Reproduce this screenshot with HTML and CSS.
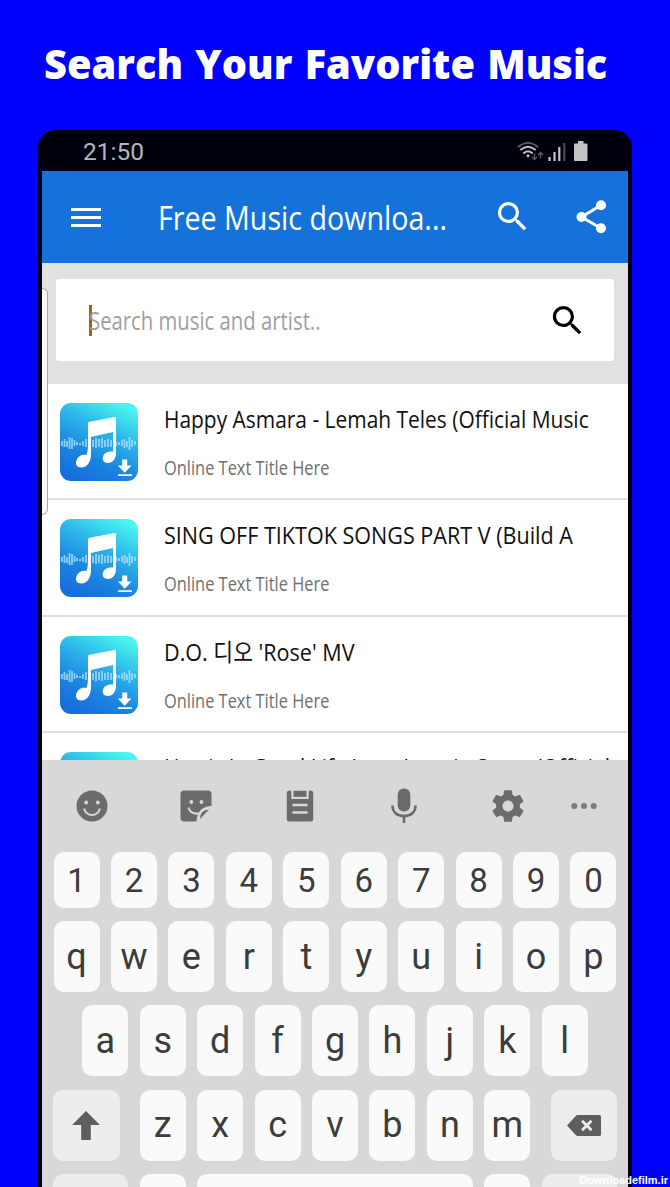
FILE: index.html
```html
<!DOCTYPE html>
<html lang="en">
<head>
    <meta charset="UTF-8">
    <meta name="viewport" content="width=device-width, initial-scale=1.0">
    <title>Search Your Favorite Music</title>
    <link rel="stylesheet" href="styles.css">
</head>
<body>
    <!-- shared shapes -->
    <svg class="defs" width="0" height="0">
        <defs>
            <linearGradient id="cover-bg" x1="0.25" y1="1" x2="0.75" y2="0">
                <stop offset="0" stop-color="#176ddb"/>
                <stop offset="0.3" stop-color="#1b84e0"/>
                <stop offset="0.65" stop-color="#2db6ea"/>
                <stop offset="1" stop-color="#48f5ef"/>
            </linearGradient>
        </defs>
        <symbol id="cover" viewBox="0 0 78 78">
            <rect width="78" height="78" rx="11" fill="url(#cover-bg)"/>
            <path d="M2 38v5M4.500 36v8M7 38v6M9.500 34v12M12 35v11M14.500 37v6M17 39v3M20 40v2M23 38v5M26 36v8M30 36v9M33 37v7M36 35v10M39 36v8M42 35v10M45 37v7M48 36v8M51 37v7M56 38v5M59 39v3M62 37v6M64.500 36v9M67 38v6M69.500 34v13M72 37v7M75 38v4" stroke="#bfeaff" stroke-width="1.800" opacity=".7"/>
            <path d="M28 20.500Q28 19 29.500 18.700L54.500 14Q56 13.800 56 15.200V50C56 56 52.500 60 48 60C43.500 60 42 57 43 53.500C44 50 48 48 53 48.500V29L31 34V51C31 59 27 64.500 21.500 64.500C16.500 64.500 15 61 16.500 57.500C18 53 22 51.300 26.500 52C27.700 49 28 45 28 42Z" fill="#fff"/>
            <path d="M62.200 56.500h5v6h4.300l-6.800 7.300-6.800-7.300h4.300zM58 71.200h14v1.800H58z" fill="#fff"/>
        </symbol>
        <symbol id="search" viewBox="0 0 24 24">
            <path d="M15.500 14h-.79l-.28-.27A6.471 6.471 0 0 0 16 9.500 6.500 6.500 0 1 0 9.500 16c1.610 0 3.090-.59 4.230-1.570l.27.28v.79l5 4.990L20.490 19l-4.990-5zm-6 0C7.010 14 5 11.990 5 9.500S7.010 5 9.500 5 14 7.010 14 9.500 11.990 14 9.500 14z" fill="currentColor"/>
        </symbol>
    </svg>

    <h1 class="headline"><span>Search Your Favorite Music</span></h1>

    <div class="phone">
        <div class="status-bar">
            <div class="clock">21:50</div>
            <svg class="status-icons" width="72" height="24" viewBox="0 0 72 24">
                <g fill="none" stroke="#c4c4ca" stroke-width="1.800">
                    <path d="M.8 7.200Q11 -1.500 21.200 7.200" stroke="#5b5b65"/>
                    <path d="M3.300 10.200Q11 3.300 18.700 10.200M6.300 13.500Q11 9 15.700 13.500"/>
                    <path d="M17.500 13.500v6M15 17l2.500 2.500L20 17M23.500 18.500v-6M21 15l2.500-2.500L26 15" stroke="#5b5b65" stroke-width="1.400"/>
                    <path d="M32.500 17v4M37.500 12v9M42.300 7v14" stroke-width="2.200"/>
                    <path d="M47.300 3v18" stroke="#4b4b55" stroke-width="2.200"/>
                </g>
                <circle cx="11" cy="15.800" r="1.500" fill="#c4c4ca"/>
                <path d="M57 4.500q0-1 1-1h3V1h5.500v2.500h3q1 0 1 1V20q0 1-1 1H58q-1 0-1-1z" fill="#c4c4c6"/>
            </svg>
        </div>

        <div class="app-bar">
            <div class="menu"><i></i><i></i><i></i></div>
            <div class="app-title"><span>Free Music downloa...</span></div>
            <svg class="bar-search" width="39" height="39"><use href="#search"/></svg>
            <svg class="share" width="31" height="34" viewBox="0 0 31 34">
                <path d="M25 5.300L5.500 17 25 28.300" fill="none" stroke="#fff" stroke-width="3"/>
                <g fill="#fff"><circle cx="25" cy="5.300" r="5"/><circle cx="5.500" cy="17" r="5"/><circle cx="25" cy="28.300" r="5"/></g>
            </svg>
        </div>

        <div class="search-area">
            <div class="search-box">
                <div class="placeholder"><span>Search music and artist..</span></div>
                <svg width="39" height="39"><use href="#search"/></svg>
            </div>
        </div>

        <div class="song-list">
            <div class="song">
                <svg class="cover"><use href="#cover"/></svg>
                <div class="song-text">
                    <div class="song-title"><span>Happy Asmara - Lemah Teles (Official Music</span></div>
                    <div class="song-sub"><span>Online Text Title Here</span></div>
                </div>
            </div>
            <div class="song">
                <svg class="cover"><use href="#cover"/></svg>
                <div class="song-text">
                    <div class="song-title caps"><span>SING OFF TIKTOK SONGS PART V (Build A</span></div>
                    <div class="song-sub"><span>Online Text Title Here</span></div>
                </div>
            </div>
            <div class="song">
                <svg class="cover"><use href="#cover"/></svg>
                <div class="song-text">
                    <div class="song-title caps"><span>D.O. 디오 'Rose' MV</span></div>
                    <div class="song-sub"><span>Online Text Title Here</span></div>
                </div>
            </div>
            <div class="song">
                <svg class="cover"><use href="#cover"/></svg>
                <div class="song-text">
                    <div class="song-title last"><span>Harris J - Good Life Lagu Inggris Cover (Official</span></div>
                </div>
            </div>
        </div>

        <div class="keyboard">
            <div class="toolbar">
                <svg width="32" height="32" viewBox="0 0 32 32">
                    <circle cx="16" cy="16" r="15.500" fill="#6b6b6b"/>
                    <circle cx="10.200" cy="12.500" r="1.900" fill="#d8d8d8"/><circle cx="21.800" cy="12.500" r="1.900" fill="#d8d8d8"/>
                    <path d="M8 18.500Q10 25 16 25T24 18.500" fill="none" stroke="#d8d8d8" stroke-width="2"/>
                </svg>
                <svg width="32" height="32" viewBox="0 0 32 32">
                    <path d="M4 .5h24q3.500 0 3.500 3.500v12C23 16 17 21 16.500 31.500H4Q.5 31.500 .5 28V4Q.5 .5 4 .5z" fill="#6b6b6b"/>
                    <path d="M20 29Q20 20 29 19.500z" fill="#6b6b6b"/>
                    <circle cx="11.300" cy="12" r="1.900" fill="#d8d8d8"/><circle cx="21.500" cy="12" r="1.900" fill="#d8d8d8"/>
                    <path d="M8.500 17.500Q10.500 24.500 19 23.500" fill="none" stroke="#d8d8d8" stroke-width="2"/>
                </svg>
                <svg width="32" height="32" viewBox="0 0 32 32">
                    <path d="M5 .8h2.300V9h17.400V.8H27q2.200 0 2.200 2.200V29.300q0 2.200-2.200 2.200H5q-2.200 0-2.200-2.200V3Q2.800.8 5 .8z" fill="#6b6b6b"/>
                    <path d="M9.500.8h13v6h-13z" fill="#6b6b6b"/>
                    <path d="M8.500 15h15M8.500 22.500h15" stroke="#d8d8d8" stroke-width="2.600"/>
                </svg>
                <svg width="32" height="36" viewBox="0 0 32 36">
                    <rect x="9.700" y=".5" width="12.600" height="23" rx="6" fill="#6b6b6b"/>
                    <path d="M4.500 17.500C4.500 24 9 28 16 28S27.500 24 27.500 17.500M16 28v7" fill="none" stroke="#6b6b6b" stroke-width="2.600"/>
                </svg>
                <svg width="38" height="38" viewBox="0 0 24 24">
                    <path d="M19.430 12.980c.04-.32.07-.64.07-.98s-.03-.66-.07-.98l2.110-1.650c.19-.15.24-.42.12-.64l-2-3.460c-.12-.22-.39-.3-.61-.22l-2.490 1c-.52-.4-1.080-.73-1.690-.98l-.38-2.650C14.460 2.180 14.250 2 14 2h-4c-.25 0-.46.18-.49.42l-.38 2.650c-.61.25-1.170.59-1.690.98l-2.490-1c-.23-.09-.49 0-.61.22l-2 3.460c-.13.22-.07.49.12.64l2.110 1.650c-.04.32-.07.65-.07.98s.03.66.07.98l-2.110 1.650c-.19.15-.24.42-.12.64l2 3.460c.12.22.39.3.61.22l2.490-1c.52.4 1.080.73 1.690.98l.38 2.650c.03.24.24.42.49.42h4c.25 0 .46-.18.49-.42l.38-2.650c.61-.25 1.170-.59 1.690-.98l2.490 1c.23.09.49 0 .61-.22l2-3.460c.12-.22.07-.49-.12-.64l-2.110-1.650zM12 15.500c-1.930 0-3.500-1.570-3.500-3.500s1.570-3.500 3.500-3.500 3.500 1.570 3.500 3.500-1.570 3.500-3.500 3.500z" fill="#6b6b6b"/>
                </svg>
                <svg width="26" height="8" viewBox="0 0 26 8" fill="#7b7b7b">
                    <circle cx="3.300" cy="4" r="3"/><circle cx="13" cy="4" r="3"/><circle cx="22.700" cy="4" r="3"/>
                </svg>
            </div>

            <div class="keys">
                <div class="row numbers">
                    <b>1</b><b>2</b><b>3</b><b>4</b><b>5</b><b>6</b><b>7</b><b>8</b><b>9</b><b>0</b>
                </div>
                <div class="row">
                    <b>q</b><b>w</b><b>e</b><b>r</b><b>t</b><b>y</b><b>u</b><b>i</b><b>o</b><b>p</b>
                </div>
                <div class="row">
                    <b>a</b><b>s</b><b>d</b><b>f</b><b>g</b><b>h</b><b>j</b><b>k</b><b>l</b>
                </div>
                <div class="row shift-row">
                    <b class="dark wide">
                        <svg width="28" height="29" viewBox="0 0 28 29"><path d="M14 0l14 14h-9.200v15H9.200V14H0z" fill="#5e5e5e"/></svg>
                    </b>
                    <div class="letters"><b>z</b><b>x</b><b>c</b><b>v</b><b>b</b><b>n</b><b>m</b></div>
                    <b class="dark wide">
                        <svg width="34" height="21" viewBox="0 0 34 21">
                            <path d="M0 10.500L8.500 1.300Q9.500 0 11 0H32.500Q34 0 34 1.500V19.500Q34 21 32.500 21H11Q9.500 21 8.500 19.700z" fill="#5e5e5e"/>
                            <path d="M15 5.700l9.500 9.600M24.500 5.700L15 15.300" stroke="#ededed" stroke-width="2.800"/>
                        </svg>
                    </b>
                </div>
                <div class="row">
                    <b class="dark sym"></b><b></b><b class="space"></b><b></b><b class="dark sym"></b>
                </div>
            </div>
        </div>

        <div class="edge-handle"></div>
    </div>

    <div class="watermark">Downloadefilm.ir</div>
</body>
</html>
```
FILE: styles.css
```css
* {
    box-sizing: border-box;
}
body {
    margin: 0;
    width: 670px;
    height: 1187px;
    overflow: hidden;
    position: relative;
    background: #0000fe;
    font-family: "Open Sans", "Noto Sans CJK KR", sans-serif;
}
.defs {
    position: absolute;
}
svg {
    display: block;
    flex: none;
}
/* narrowed text */
span {
    display: inline-block;
    white-space: nowrap;
    transform-origin: 0 50%;
}
.headline {
    margin: 0;
    height: 130px;
    padding-left: 44px;
    color: #fff;
    font-size: 41px;
    font-weight: 800;
    line-height: 127px;
    word-spacing: 2px;
}
.headline span {
    transform: scaleX(0.97);
}

.phone {
    position: relative;
    width: 594px;
    height: 1057px;
    margin-left: 38px;
    padding: 0 4px;
    background: #00000c;
    border-radius: 18px 18px 0 0;
    overflow: hidden;
    display: flex;
    flex-direction: column;
}
.status-bar {
    height: 41px;
    flex: none;
    display: flex;
    justify-content: space-between;
    padding: 10px 39px 0 41px;
}
.clock {
    font-family: Roboto, sans-serif;
    font-size: 24.5px;
    line-height: 24px;
    color: #b5b5bd;
}

.app-bar {
    height: 92px;
    flex: none;
    display: flex;
    align-items: center;
    padding-left: 29px;
    background: #1572da;
    color: #fff;
}
.menu {
    width: 30px;
    display: flex;
    flex-direction: column;
    gap: 5px;
}
.menu i {
    height: 3px;
    background: #fff;
}
.app-title {
    width: 346px;
    padding: 2px 0 0 57px;
    font-size: 33px;
    line-height: 92px;
}
.app-title span {
    transform: scaleX(0.868);
}
.bar-search {
    margin: 0 0 2px 46px;
}
.share {
    margin-left: 44px;
}

.search-area {
    height: 121px;
    flex: none;
    padding: 16px 14px 0;
    background: #e1e1e0;
}
.search-box {
    height: 82px;
    display: flex;
    align-items: center;
    justify-content: space-between;
    padding: 0 27px 0 33px;
    border-radius: 3px;
    background: #fff;
    color: #000;
}
.placeholder {
    height: 31px;
    border-left: 3px solid #9b6412;
    color: #a0a0a0;
    font-size: 25px;
    line-height: 31px;
}
.placeholder span {
    margin-left: -3px;
    transform: scaleX(0.812);
}

.song-list {
    height: 376px;
    flex: none;
    overflow: hidden;
    background: #fff;
}
.song {
    height: 116.4px;
    display: flex;
    padding: 19px 0 0 18px;
    border-bottom: 2px solid #dfdfdf;
}
.cover {
    width: 78px;
    height: 78px;
}
.song-text {
    width: 440px;
    padding-left: 26px;
}
.song-title {
    height: 34px;
    font-size: 24px;
    line-height: 32px;
    color: #111;
}
.song-title span {
    transform: scaleX(0.872);
}
.song-title.caps span {
    transform: scaleX(0.898);
}
.song-title.last {
    line-height: 30px;
}
.song-sub {
    margin-top: 17px;
    font-size: 20px;
    line-height: 28px;
    color: #707070;
}
.song-sub span {
    transform: scaleX(0.82);
}

.keyboard {
    flex: 1;
    background: #d8d8d8;
}
.toolbar {
    height: 92px;
    display: flex;
    align-items: center;
    padding: 0 0 0 33.500px;
    gap: 72px;
}
.toolbar svg:nth-child(5) {
    margin-left: -3px;
}
.toolbar svg:nth-child(6) {
    margin-left: -28px;
}
.keys {
    display: flex;
    flex-direction: column;
    gap: 13.2px;
    padding: 0 11px;
}
.row, .letters {
    display: flex;
    justify-content: center;
    gap: 11.45px;
}
.keys b {
    width: 46px;
    height: 71px;
    flex: none;
    display: flex;
    align-items: center;
    justify-content: center;
    border-radius: 10px;
    background: #fafafa;
    color: #3c3c3c;
    font: 400 36px Roboto, sans-serif;
}
.keys .numbers b {
    height: 56px;
    font-size: 33px;
}
.keys .dark {
    background: #ededed;
}
.keys .wide {
    width: 66.500px;
}
.keys .sym {
    width: 75px;
}
.keys .space {
    width: 276px;
}
.keys .shift-row {
    justify-content: space-between;
}

/* edge panel tab over the left side of the screen */
.edge-handle {
    position: absolute;
    left: 4px;
    top: 158px;
    width: 6px;
    height: 227px;
    border: 1px solid #aaa;
    border-left: 0;
    border-radius: 0 7px 7px 0;
    background: #f8f8f8;
}
.watermark {
    position: absolute;
    right: 2px;
    bottom: 0;
    font: bold 11px/14px "Liberation Sans", sans-serif;
    color: #fff;
}
```
